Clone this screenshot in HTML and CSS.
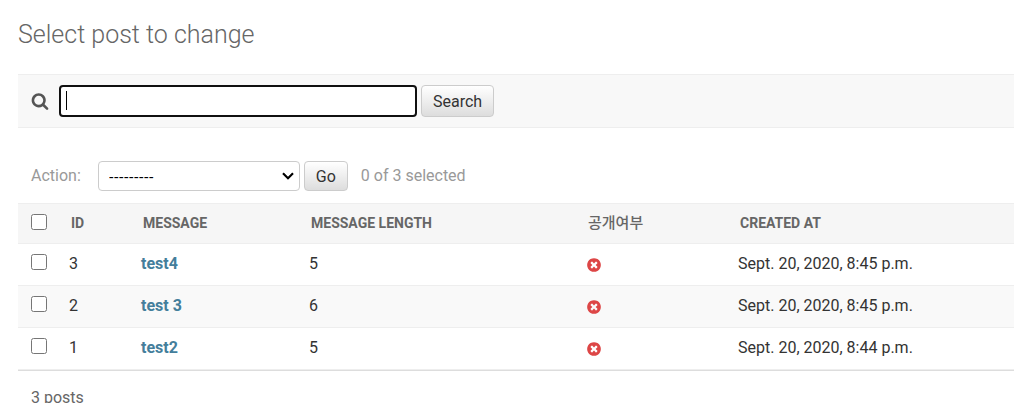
FILE: index.html
```html
<!DOCTYPE html>
<html lang="en">

<head>
  <meta charset="UTF-8">
  <meta name="viewport" content="width=device-width, initial-scale=1.0">
  <title>Select post to change</title>
  <link rel="stylesheet" href="styles.css">
</head>

<body>
  <!-- Shared icon shapes -->
  <svg class="icon-defs" width="0" height="0" aria-hidden="true">
    <symbol id="icon-search" viewBox="0 0 1792 1792">
      <path d="M1216 832q0-185-131.5-316.5t-316.5-131.5-316.5 131.5-131.5 316.5 131.5 316.5 316.5 131.5 316.5-131.5 131.5-316.5zm512 832q0 52-38 90t-90 38q-54 0-90-38l-343-342q-179 124-399 124-143 0-273.5-55.5t-225-150-150-225-55.5-273.5 55.5-273.5 150-225 225-150 273.5-55.5 273.5 55.5 225 150 150 225 55.5 273.5q0 220-124 399l343 343q37 37 37 90z"/>
    </symbol>
    <symbol id="icon-no" viewBox="0 0 1792 1792">
      <path d="M1277 1122q0-26-19-45l-181-181 181-181q19-19 19-45 0-27-19-46l-90-90q-19-19-46-19-26 0-45 19l-181 181-181-181q-19-19-45-19-27 0-46 19l-90 90q-19 19-19 46 0 26 19 45l181 181-181 181q-19 19-19 45 0 27 19 46l90 90q19 19 46 19 26 0 45-19l181-181 181 181q19 19 45 19 27 0 46-19l90-90q19-19 19-46zm387-226q0 209-103 385.5t-279.5 279.5-385.5 103-385.5-103-279.5-279.5-103-385.5 103-385.5 279.5-279.5 385.5-103 385.5 103 279.5 279.5 103 385.5z"/>
    </symbol>
  </svg>

  <main class="content">
    <h1>Select post to change</h1>

    <form class="toolbar">
      <label for="searchbar"><svg class="search-icon" role="img" aria-label="Search"><use href="#icon-search"/></svg></label>
      <input type="text" id="searchbar" class="searchbar" name="q">
      <button type="submit" class="button">Search</button>
    </form>

    <form class="changelist">
      <div class="actions">
        <label for="action">Action:</label>
        <select id="action" class="action-select" name="action">
          <option value="">---------</option>
        </select>
        <button type="submit" class="button">Go</button>
        <span class="action-counter">0 of 3 selected</span>
      </div>

      <table class="results">
        <colgroup>
          <col class="col-check">
          <col class="col-id">
          <col class="col-message">
          <col class="col-length">
          <col class="col-public">
          <col class="col-created">
        </colgroup>
        <thead>
          <tr>
            <th><input type="checkbox" aria-label="Select all"></th>
            <th>ID</th>
            <th>Message</th>
            <th>Message length</th>
            <th lang="ko">공개여부</th>
            <th>Created at</th>
          </tr>
        </thead>
        <tbody>
          <tr>
            <td><input type="checkbox" aria-label="Select test4"></td>
            <td>3</td>
            <td><a href="#">test4</a></td>
            <td>5</td>
            <td><svg class="no-icon" role="img" aria-label="False"><use href="#icon-no"/></svg></td>
            <td>Sept. 20, 2020, 8:45 p.m.</td>
          </tr>
          <tr>
            <td><input type="checkbox" aria-label="Select test 3"></td>
            <td>2</td>
            <td><a href="#">test 3</a></td>
            <td>6</td>
            <td><svg class="no-icon" role="img" aria-label="False"><use href="#icon-no"/></svg></td>
            <td>Sept. 20, 2020, 8:45 p.m.</td>
          </tr>
          <tr>
            <td><input type="checkbox" aria-label="Select test2"></td>
            <td>1</td>
            <td><a href="#">test2</a></td>
            <td>5</td>
            <td><svg class="no-icon" role="img" aria-label="False"><use href="#icon-no"/></svg></td>
            <td>Sept. 20, 2020, 8:44 p.m.</td>
          </tr>
        </tbody>
      </table>

      <p class="paginator">3 posts</p>
    </form>
  </main>
</body>

</html>
```

FILE: styles.css
```css
* {
  box-sizing: border-box;
}

body {
  margin: 0;
  background: #fff;
  color: #333;
  font-family: Roboto, "Noto Sans CJK KR", sans-serif;
  font-size: 16px;
  line-height: 20px;
}

/* the page scrolls without a visible bar */
html {
  scrollbar-width: none;
}

.icon-defs {
  position: absolute;
}

.content {
  padding: 20px 0 0 18px;
}

h1 {
  margin: 0 0 24px;
  color: #666;
  font-size: 25px;
  font-weight: 300;
  line-height: 30px;
}

button,
input,
select {
  margin: 0;
  font-family: inherit;
  font-size: 16px;
}

/* Search bar */
.toolbar {
  display: flex;
  align-items: center;
  gap: 4px;
  padding: 10px 12px;
  border-top: 1px solid #eee;
  border-bottom: 1px solid #eee;
  background: #f8f8f8;
}

.search-icon {
  display: block;
  width: 18px;
  height: 18px;
  margin: 0 6px 0 1px;
  fill: #555;
}

.searchbar {
  width: 358px;
  height: 32px;
  padding: 4px;
  border: 2px solid #101010;
  border-radius: 4px;
  outline: none;
  /* text cursor */
  background: linear-gradient(#000, #000) 5px 4px / 1px 19px no-repeat #fff;
  caret-color: transparent;
}

.button {
  height: 32px;
  padding: 0 11px;
  border: 1px solid #ccc;
  border-radius: 4px;
  background: linear-gradient(#fff, #ddd);
  color: #333;
}

/* Actions */
.actions {
  display: flex;
  align-items: center;
  gap: 4px;
  padding: 33px 13px 12px;
  color: #999;
}

.actions label {
  margin-right: 13px;
}

.actions .button {
  height: 30px;
}

.action-select {
  appearance: none;
  width: 202px;
  height: 30px;
  padding: 0 10px;
  border: 1px solid #ccc;
  border-radius: 4px;
  background: #fff url("data:image/svg+xml,%3Csvg xmlns='http://www.w3.org/2000/svg' viewBox='0 0 12 8'%3E%3Cpath d='M1 1.2l5 5 5-5' fill='none' stroke='%23000' stroke-width='2.2'/%3E%3C/svg%3E") right 5px center / 12px 8px no-repeat;
  color: #000;
  font-family: "Liberation Sans", Arial, sans-serif;
  font-size: 15px;
}

.action-counter {
  margin-left: 9px;
}

/* Results */
.results {
  width: 100%;
  border-collapse: separate;
  border-spacing: 0;
  border-bottom: 1px solid #ddd;
  table-layout: fixed;
}

.col-check {
  width: 41px;
}

.col-id {
  width: 72px;
}

.col-message {
  width: 168px;
}

.col-length {
  width: 277px;
}

.col-public {
  width: 152px;
}

th,
td {
  padding: 10px 10px 11px;
  border-bottom: 1px solid #eee;
  text-align: left;
  vertical-align: top;
}

th {
  padding: 9px 12px 10px;
  border-top: 1px solid #eee;
  background: #f6f6f6;
  color: #666;
  font-size: 14px;
  font-weight: 700;
  text-transform: uppercase;
}

th:lang(ko) {
  font-size: 15px;
  font-weight: 500;
}

th:first-child,
td:first-child {
  padding: 10px 0 0 13px;
}

tbody tr:nth-child(even) {
  background: #f9f9f9;
}

.results input {
  display: block;
  width: 16px;
  height: 16px;
}

.results a {
  color: #447e9b;
  font-weight: 700;
  text-decoration: none;
}

.no-icon {
  display: block;
  width: 16px;
  height: 16px;
  margin-top: 3px;
  fill: #dd4646;
}

.paginator {
  margin: 0;
  padding: 17px 13px;
  color: #666;
}
```
